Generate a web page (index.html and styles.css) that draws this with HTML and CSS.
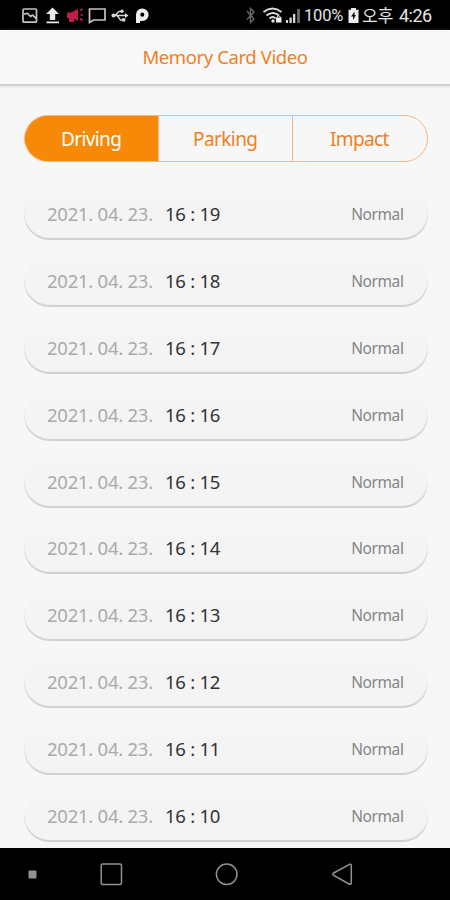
FILE: index.html
```html
<!DOCTYPE html>
<html lang="en">
<head>
  <meta charset="UTF-8">
  <title>Memory Card Video</title>
  <link rel="stylesheet" href="styles.css">
</head>
<body>

  <!-- Status bar -->
  <div class="status-bar">
    <svg class="status-icons" width="140" height="30" viewBox="0 0 140 30">
      <g fill="none" stroke="#c4c4c4" stroke-width="1.7">
        <rect x="13" y="9" width="13.5" height="13.2" rx="1"/>
        <path d="M14 14l3.5-.5 3 3 2-1.5 4 3.5"/>
        <path d="M79.500 9h15.500v11h-11.500l-4 2.500z"/>
      </g>
      <path fill="#e8e8e8" d="M42.500 7.500l6.500 6.500h-3.800v6h-5.400v-6H36zM36.500 21.500h12.500v1.800H36.500z"/>
      <path fill="#c01d4c" d="M57 12.500h4l7-3.500v12l-4-2v3h-5v-4h-2z"/>
      <g fill="none" stroke="#c01d4c" stroke-width="1.700"><path d="M70 10.500l2.500-1.500M70.500 15H73M70 18.500l2.500 2"/></g>
      <g fill="none" stroke="#d8d8d8" stroke-width="1.300">
        <path d="M103 15.500h14M105 15.500l4-4h3M107 15.500l3.500 4.500h3"/>
      </g>
      <g fill="#d8d8d8"><circle cx="103.500" cy="15.500" r="2"/><circle cx="112" cy="11.300" r="1.700"/><path d="M115 13l3.500 2.500-3.500 2.500zM112 18.300h3.300v3.300H112z"/></g>
      <path fill="#eee" fill-rule="evenodd" d="M126 14.800A6.300 6.300 0 1 1 132.500 21h-2.500v2H126zM132.300 12.600a2 2.100 0 1 0 0 4.200 2 2.100 0 0 0 0-4.200z"/>
    </svg>
    <div class="status-right">
      <svg width="58" height="30" viewBox="0 0 58 30">
        <path d="M3 11l7 8-3.500 3.500v-14L10 12l-7 7.500" fill="none" stroke="#686868" stroke-width="1.400"/>
        <g fill="none" stroke="#ddd" stroke-width="1.900">
          <path d="M19.500 12q9-7 18 0M22.500 15.500q6.500-5 12.500 0M25.500 18.500q3.500-3 6 0"/>
        </g>
        <circle cx="29" cy="21" r="1.700" fill="#ddd"/>
        <path d="M32 17.500h5.500v5H32z" fill="#eee"/>
        <path d="M33 18v-1q1.700-2.500 3.500 0v1" fill="none" stroke="#eee"/>
        <g fill="#d8d8d8"><path d="M42 20h2v3h-2zM45.500 17.500h2.300V23h-2.300zM49 14h2.300v9H49z"/><path fill="#666" d="M53 9h3v14h-3z"/></g>
      </svg>
      <span class="battery-text">100%</span>
      <svg width="11" height="30" viewBox="0 0 11 30">
        <path d="M3 8h5v1.700h2.500V23H.500V9.700H3z" fill="#eee"/>
        <path d="M6.500 11.500L3 16.500h2v3.500l3-5H6.500z" fill="#111"/>
      </svg>
      <span class="period">오후</span>
      <span class="clock">4:26</span>
    </div>
  </div>

  <div class="header">Memory Card Video</div>

  <div class="content">
    <div class="tabs">
      <div class="tab active"><span>Driving</span></div>
      <div class="tab"><span>Parking</span></div>
      <div class="tab"><span>Impact</span></div>
    </div>

    <!-- Recorded videos -->
    <div class="list">
      <div class="row"><span class="date">2021. 04. 23.</span><span class="time">16 : 19</span><span class="type">Normal</span></div>
      <div class="row"><span class="date">2021. 04. 23.</span><span class="time">16 : 18</span><span class="type">Normal</span></div>
      <div class="row"><span class="date">2021. 04. 23.</span><span class="time">16 : 17</span><span class="type">Normal</span></div>
      <div class="row"><span class="date">2021. 04. 23.</span><span class="time">16 : 16</span><span class="type">Normal</span></div>
      <div class="row"><span class="date">2021. 04. 23.</span><span class="time">16 : 15</span><span class="type">Normal</span></div>
      <div class="row"><span class="date">2021. 04. 23.</span><span class="time">16 : 14</span><span class="type">Normal</span></div>
      <div class="row"><span class="date">2021. 04. 23.</span><span class="time">16 : 13</span><span class="type">Normal</span></div>
      <div class="row"><span class="date">2021. 04. 23.</span><span class="time">16 : 12</span><span class="type">Normal</span></div>
      <div class="row"><span class="date">2021. 04. 23.</span><span class="time">16 : 11</span><span class="type">Normal</span></div>
      <div class="row"><span class="date">2021. 04. 23.</span><span class="time">16 : 10</span><span class="type">Normal</span></div>
    </div>
  </div>

  <!-- Navigation bar -->
  <div class="nav-bar">
    <svg width="450" height="52" viewBox="0 0 450 52">
      <rect x="28.500" y="22.500" width="8" height="8" rx="1" fill="#929292"/>
      <g fill="none" stroke="#929292" stroke-width="1.500">
        <rect x="101.200" y="16" width="20.300" height="20.500" rx="1.500"/>
        <circle cx="226.700" cy="26.300" r="10.300"/>
        <path d="M349.500 16.300L333.600 25q-1.600 1.200 0 2.400l15.900 8.800q1.800.5 1.800-1.400V17.700q0-1.900-1.800-1.400z"/>
      </g>
    </svg>
  </div>

</body>
</html>
```

FILE: styles.css
```css
body {
  background-color: #f7f7f7;
  font-family: "Noto Sans", "Noto Sans CJK KR", sans-serif;
  margin: 0;
  height: 900px;
  display: flex;
  flex-direction: column;
  overflow: hidden;
}

svg {
  display: block;
}

.status-bar {
  background-color: black;
  height: 30px;
  padding: 0 18px 0 10px;
  display: flex;
  justify-content: space-between;
  flex-shrink: 0;
}

.status-right {
  display: flex;
  align-items: center;
  color: #e4e4e4;
  font-family: Roboto, "Noto Sans CJK KR", sans-serif;
  line-height: 30px;
  white-space: nowrap;
}

.battery-text {
  width: 39px;
  margin: 2px 5px 0 2px;
  font-size: 16.5px;
  letter-spacing: -0.2px;
}

.period {
  width: 31px;
  margin: 2px 6px 0 3px;
  font-size: 17px;
}

.clock {
  width: 33px;
  margin-top: 2px;
  font-size: 18px;
  letter-spacing: -0.5px;
}

.header {
  height: 54px;
  line-height: 53px;
  flex-shrink: 0;
  text-align: center;
  color: #f08025;
  font-size: 18.5px;
  letter-spacing: -0.4px;
  background-color: #f8f8f8;
  border-bottom: 2px solid #d0d0d0;
  box-shadow: 0 1px 2px #ddd;
}

.content {
  flex: 1;
  min-height: 0;
  padding: 29px 22.5px 0 24px;
}

.tabs {
  box-sizing: border-box;
  height: 47px;
  display: flex;
  border: 1px solid #f7b681;
  border-radius: 24px;
  overflow: hidden;
}

.tab {
  flex: 1;
  text-align: center;
  line-height: 46px;
  font-size: 19px;
  letter-spacing: -0.6px;
  color: #f08025;
}

.tab span {
  margin-right: 1px;
}

.tab + .tab {
  border-left: 1px solid #f7b681;
}

.tab.active {
  background-color: #f68a08;
  color: white;
  box-shadow: 0 0 0 1px #f68a08;
}

.list {
  display: flex;
  flex-direction: column;
  gap: 15.9px;
  margin-top: 27px;
}

.row {
  box-sizing: border-box;
  height: 51px;
  padding: 0 24px 2px 23px;
  display: flex;
  align-items: center;
  border-radius: 26px;
  background: linear-gradient(#f7f7f7, #f4f4f4 35%);
  box-shadow: inset 0 -2px 1px #d0d0d0;
  font-size: 18.5px;
  letter-spacing: -0.25px;
}

.date {
  width: 118px;
  color: #aaa;
}

.time {
  color: #333;
}

.type {
  margin-top: 1px;
  margin-left: auto;
  color: #858585;
  font-size: 15.5px;
  letter-spacing: -0.4px;
}

.nav-bar {
  background-color: black;
  height: 52px;
  flex-shrink: 0;
}
```
